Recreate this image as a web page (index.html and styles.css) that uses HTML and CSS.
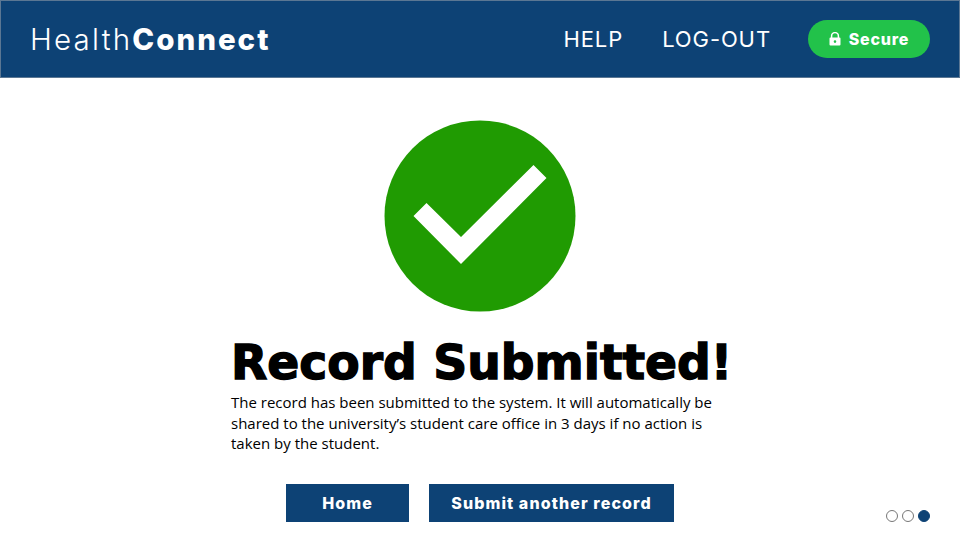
FILE: index.html
```html
<!DOCTYPE html>
<html lang="en">
<head>
    <meta charset="UTF-8">
    <meta name="viewport" content="width=device-width, initial-scale=1.0">
    <title>Record Submitted</title>
    <link rel="stylesheet" href="styles.css">
</head>
<body>
    <header class="topbar">
        <div class="logo">Health<strong>Connect</strong></div>
        <nav class="nav">
            <a href="#">HELP</a>
            <a href="#">LOG-OUT</a>
        </nav>
        <div class="secure">
            <svg class="lock" viewBox="0 0 12 14" width="12" height="14" aria-hidden="true">
                <path d="M2.6 6V4a3.4 3.4 0 0 1 6.8 0v2" fill="none" stroke="#fff" stroke-width="1.5"/>
                <path fill="#fff" fill-rule="evenodd" d="M1.5 5.6h9a1 1 0 0 1 1 1v6a1 1 0 0 1-1 1h-9a1 1 0 0 1-1-1v-6a1 1 0 0 1 1-1zM6 8.3a1.3 1.3 0 1 0 0 2.6 1.3 1.3 0 0 0 0-2.6z"/>
            </svg>
            Secure
        </div>
    </header>

    <main class="content">
        <svg class="check" viewBox="0 0 192 192" width="192" height="192" aria-hidden="true">
            <circle cx="96" cy="96" r="95.5" fill="#209b02"/>
            <path fill="#fff" d="M29.5 96 42.5 83 77 117 149.5 45 162.5 58 77 144z"/>
        </svg>
        <div class="message">
            <h1>Record Submitted!</h1>
            <p>The record has been submitted to the system. It will automatically be shared to the university’s student care office in 3 days if no action is taken by the student.</p>
        </div>
        <div class="actions">
            <a class="btn btn-home" href="#">Home</a>
            <a class="btn btn-again" href="#">Submit another record</a>
        </div>
    </main>

    <div class="steps">
        <span class="dot"></span>
        <span class="dot"></span>
        <span class="dot active"></span>
    </div>
</body>
</html>
```

FILE: styles.css
```css
body {
    margin: 0;
    width: 960px;
    height: 540px;
    overflow: hidden;
    position: relative;
    background-color: #fff;
    font-family: "Open Sans", sans-serif;
    color: #000;
}

a {
    color: inherit;
    text-decoration: none;
}

.topbar {
    display: flex;
    align-items: center;
    box-sizing: border-box;
    height: 78px;
    padding: 0 29px;
    background-color: #0d4275;
    border: 1px solid #5b7793;
    color: #fff;
    font-family: Inter, sans-serif;
}

.logo {
    font-size: 29.5px;
    font-weight: 300;
    letter-spacing: 2.2px;
}

.logo strong {
    font-weight: 800;
    letter-spacing: 2px;
}

.nav {
    display: flex;
    gap: 39px;
    margin-left: auto;
    margin-right: 37px;
    font-size: 22px;
    font-weight: 400;
    letter-spacing: 0.9px;
}

.secure {
    display: flex;
    align-items: center;
    justify-content: center;
    gap: 8px;
    width: 122px;
    height: 38px;
    border-radius: 19px;
    background-color: #22c24a;
    font-size: 16px;
    font-weight: 800;
    letter-spacing: 0.8px;
}

.content {
    display: flex;
    flex-direction: column;
    align-items: center;
    padding-top: 42px;
}

.check {
    display: block;
}

.message {
    width: 498px;
    margin-top: 21px;
}

h1 {
    margin: 0;
    font-family: "DejaVu Sans", sans-serif;
    font-size: 47.2px;
    font-weight: 700;
    -webkit-text-stroke: 1.4px #000;
    line-height: 59px;
    white-space: nowrap;
}

p {
    margin: 0;
    width: 490px;
    font-size: 15px;
    line-height: 20.5px;
}

.actions {
    display: flex;
    gap: 20px;
    margin-top: 30px;
}

.btn {
    display: flex;
    align-items: center;
    justify-content: center;
    height: 38px;
    background-color: #0d4275;
    color: #fff;
    font-family: Inter, sans-serif;
    font-size: 16px;
    font-weight: 800;
    letter-spacing: 1.1px;
}

.btn-home {
    width: 123px;
}

.btn-again {
    width: 245px;
}

.steps {
    position: absolute;
    right: 30px;
    bottom: 18px;
    display: flex;
    gap: 4px;
}

.dot {
    box-sizing: border-box;
    width: 12px;
    height: 12px;
    border: 1.5px solid #777;
    border-radius: 50%;
}

.dot.active {
    background-color: #0d4275;
    border-color: #0d4275;
}
```
